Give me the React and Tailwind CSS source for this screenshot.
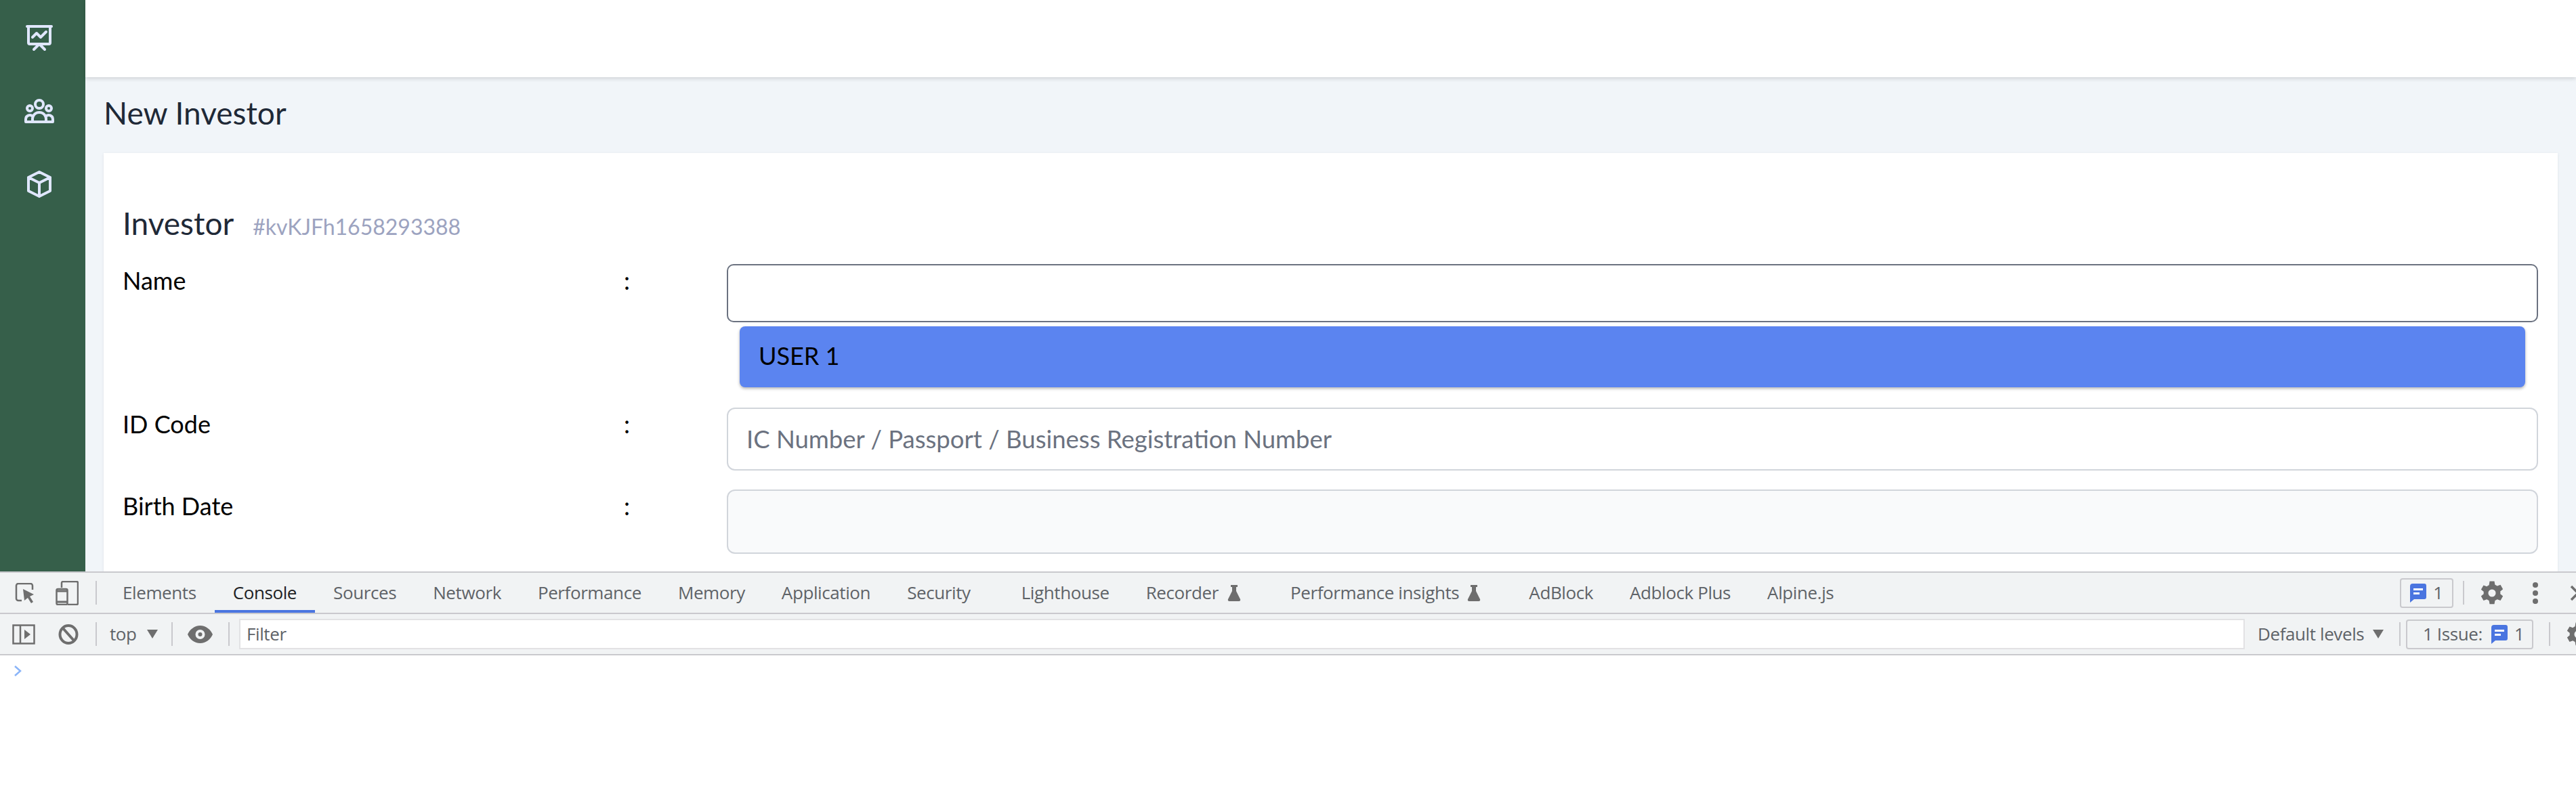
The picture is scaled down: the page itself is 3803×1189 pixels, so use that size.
import { HiOutlinePresentationChartLine, HiOutlineUserGroup, HiOutlineCube } from 'react-icons/hi';

const tabs = ['Elements', 'Console', 'Sources', 'Network', 'Performance', 'Memory', 'Application', 'Security'];

function Flask() {
  return (
    <svg className="w-[20px] h-[24px] shrink-0" viewBox="0 0 20 24" fill="#6e6e6e">
      <path d="M5 0h10v3h-2v6l6 12c.6 1.4 0 3-2 3H3c-2 0-2.600-1.600-2-3L7 9V3H5z" />
    </svg>
  );
}

function MessageIcon() {
  return (
    <svg className="w-[24px] h-[28px] shrink-0" viewBox="0 0 24 28">
      <path d="M4 0h17a3 3 0 013 3v17a3 3 0 01-3 3H6l-6 5V4a4 4 0 014-4z" fill="#4a75e0" />
      <path d="M5 7h14v3H5zM5 13h9v3H5z" fill="#fff" />
    </svg>
  );
}

function Gear({ className }) {
  return (
    <svg className={className} viewBox="0 0 24 24" fill="#6e6e6e">
      <path fillRule="evenodd" d="M14.200 0l.6 3.200c.7.3 1.400.7 2 1.200l3.100-1.100 2.300 4-2.500 2.100c.1.400.1.800.1 1.200s0 .8-.1 1.200l2.500 2.100-2.300 4-3.100-1.100c-.6.500-1.300.9-2 1.200l-.6 3.200H9.800l-.6-3.200c-.7-.3-1.400-.7-2-1.200l-3.100 1.100-2.300-4 2.500-2.100C4.200 11.800 4.200 11.400 4.200 11s0-.8.1-1.200L1.800 7.700l2.300-4 3.100 1.100c.6-.5 1.300-.9 2-1.200L9.800 0zM12 7.500a3.500 3.500 0 100 7 3.500 3.500 0 000-7z" transform="translate(0 1)" />
    </svg>
  );
}

function Sep({ className = '' }) {
  return <div className={`w-[2px] h-[35px] bg-[#c9c9cd] shrink-0 ${className}`} />;
}

function Triangle() {
  return (
    <svg className="w-[16px] h-[13px] shrink-0" viewBox="0 0 16 13" fill="#6e6e6e">
      <path d="M0 0h16L8 13z" />
    </svg>
  );
}

function Field({ label, children }) {
  return (
    <div className="flex text-[36px] leading-[48px] text-black">
      <div className="w-[740px] shrink-0">{label}</div>
      <div className="w-[152px] shrink-0">:</div>
      <div className="flex-1">{children}</div>
    </div>
  );
}

export default function App() {
  return (
    <div className="h-[1189px] w-[3803px] overflow-hidden flex flex-col bg-white font-['Lato',sans-serif]">
      <div className="h-[844px] flex overflow-hidden shrink-0">
        {/* sidebar */}
        <div className="w-[126px] shrink-0 bg-[#365f4a] flex flex-col items-start pl-[34px] gap-[60.5px] pt-[31px] text-[#e0e7ff]">
          <HiOutlinePresentationChartLine className="w-[48px] h-[48px] shrink-0" />
          <HiOutlineUserGroup className="w-[48px] h-[48px] shrink-0" />
          <HiOutlineCube className="w-[48px] h-[48px] shrink-0" />
        </div>

        <div className="flex-1 flex flex-col bg-[#f1f5f9] min-w-0">
          <div className="h-[114px] shrink-0 bg-white shadow-[0_2px_6px_rgba(0,0,0,0.15)]" />
          <div className="pl-[27px] pr-[27px]">
            <h1 className="text-[46px] leading-[56px] pt-[25px] text-[#1f2937]">New Investor</h1>
            <div className="mt-[31px] bg-white shadow-[0_1px_4px_rgba(0,0,0,0.08)] pl-[28px] pr-[29px] pt-[76px] h-[800px]">
              <div className="flex items-baseline gap-[28px] h-[56px]">
                <span className="text-[46px] leading-[56px] text-[#1f2937]">Investor</span>
                <span className="text-[32px] text-[#9ca3c0]">#kvKJFh1658293388</span>
              </div>
              <div className="mt-[32px]">
                <Field label="Name">
                  <div className="h-[86px] border-2 border-[#6b7280] rounded-[10px] bg-white" />
                  <div className="mt-[6px] mx-[19px] h-[90px] rounded-[8px] bg-[#5b84f0] pl-[28px] leading-[86px] shadow-[0_2px_4px_rgba(0,0,0,0.3)]">USER 1</div>
                </Field>
              </div>
              <div className="mt-[30px]">
                <Field label="ID Code">
                  <div className="h-[93px] border-2 border-[#d1d5db] rounded-[12px] bg-white pl-[27px] leading-[89px] text-[36.5px] text-[#6b7280]">IC Number / Passport / Business Registration Number</div>
                </Field>
              </div>
              <div className="mt-[28px]">
                <Field label="Birth Date">
                  <div className="h-[95px] border-2 border-[#d1d5db] rounded-[12px] bg-[#f9fafb]" />
                </Field>
              </div>
            </div>
          </div>
        </div>
      </div>

      {/* devtools */}
      <div className="flex-1 flex flex-col font-['Open_Sans',sans-serif] text-[#5f6368] text-[26px] tracking-[-0.4px] whitespace-nowrap">
        <div className="h-[63px] shrink-0 border-y-2 border-[#c9c9cd] bg-[#f1f3f4] flex items-center overflow-hidden">
          <svg className="w-[30px] h-[30px] ml-[22px] shrink-0" viewBox="0 0 30 30" fill="none" stroke="#6e6e6e" strokeWidth="2.500">
            <path d="M10 26H5a3 3 0 01-3-3V4a3 3 0 013-3h18a3 3 0 013 3v6" />
            <path d="M12 9l16 8-6 3 5 8-3 2-5-8-5 4z" fill="#6e6e6e" stroke="none" />
          </svg>
          <svg className="w-[34px] h-[36px] ml-[30px] shrink-0" viewBox="0 0 34 36" fill="none" stroke="#6e6e6e" strokeWidth="2.500">
            <path d="M9 10V3a2 2 0 012-2h20a2 2 0 012 2v30a2 2 0 01-2 2H18" />
            <rect x="1.500" y="12" width="16" height="23" rx="2" />
            <path d="M2 15h15M2 31h15" strokeWidth="3" />
          </svg>
          <Sep className="ml-[25px]" />
          <div className="flex items-center ml-[11px] shrink-0">
            {tabs.map((t) => (
              <div key={t} className={`relative h-[59px] px-[27px] leading-[59px] ${t === 'Console' ? 'text-[#202124]' : ''}`}>
                {t}
                {t === 'Console' && <div className="absolute left-0 right-0 bottom-0 h-[4px] bg-[#4a75e0]" />}
              </div>
            ))}
            <div className="ml-[21px] px-[27px] leading-[59px]">Lighthouse</div>
            <div className="flex items-center gap-[13px] px-[27px]">Recorder<Flask /></div>
            <div className="flex items-center gap-[12px] pl-[46px] pr-[27px]">Performance insights<Flask /></div>
            <div className="ml-[17px] px-[27px]">AdBlock</div>
            <div className="px-[27px]">Adblock Plus</div>
            <div className="px-[27px]">Alpine.js</div>
          </div>
          <div className="ml-auto flex items-center shrink-0">
            <div className="w-[79px] h-[44px] border-2 border-[#c9c9cd] rounded-[4px] flex items-center justify-center gap-[10px]"><MessageIcon />1</div>
            <Sep className="ml-[14px]" />
            <Gear className="w-[38px] h-[38px] ml-[22px] shrink-0" />
            <div className="ml-[41px] flex flex-col gap-[4px] shrink-0">
              <div className="w-[8px] h-[8px] rounded-full bg-[#6e6e6e]" />
              <div className="w-[8px] h-[8px] rounded-full bg-[#6e6e6e]" />
              <div className="w-[8px] h-[8px] rounded-full bg-[#6e6e6e]" />
            </div>
            <svg className="w-[24px] h-[24px] ml-[47px] mr-[-15px] shrink-0" viewBox="0 0 24 24" stroke="#6e6e6e" strokeWidth="3.500" fill="none">
              <path d="M2 2l20 20M22 2L2 22" />
            </svg>
          </div>
        </div>

        <div className="h-[61px] shrink-0 border-b-2 border-[#c9c9cd] bg-[#f1f3f4] flex items-center overflow-hidden">
          <svg className="w-[34px] h-[30px] ml-[18px] shrink-0" viewBox="0 0 34 30" fill="none" stroke="#6e6e6e" strokeWidth="2.500">
            <rect x="1.500" y="1.500" width="31" height="27" />
            <path d="M12 1v28" />
            <path d="M18 8l9 7-9 7z" fill="#6e6e6e" stroke="none" />
          </svg>
          <svg className="w-[30px] h-[30px] ml-[34px] shrink-0" viewBox="0 0 30 30" fill="none" stroke="#6e6e6e" strokeWidth="4">
            <ellipse cx="15" cy="15" rx="12.500" ry="13" />
            <path d="M7 6l16 18" />
          </svg>
          <Sep className="ml-[25px]" />
          <span className="ml-[19px] w-[42px] shrink-0">top</span>
          <div className="ml-[13px]"><Triangle /></div>
          <Sep className="ml-[20px]" />
          <svg className="w-[37px] h-[26px] ml-[22px] shrink-0" viewBox="0 0 37 26">
            <path fillRule="evenodd" d="M18.500 0C27 0 34 6 37 13c-3 7-10 13-18.500 13S3 20 0 13C3 6 10 0 18.500 0zm0 6a7 7 0 100 14 7 7 0 000-14z" fill="#6e6e6e" />
            <circle cx="18.500" cy="13" r="3" fill="#6e6e6e" />
          </svg>
          <Sep className="ml-[23px]" />
          <div className="ml-[14px] w-[2961px] shrink-0 h-[45px] border-2 border-[#e2e2e4] bg-white pl-[9px] leading-[41px]">Filter</div>
          <span className="ml-[19px] w-[158px] shrink-0">Default levels</span>
          <div className="ml-[12px]"><Triangle /></div>
          <Sep className="ml-[23px]" />
          <div className="ml-[8px] w-[188px] h-[44px] border-2 border-[#c9c9cd] rounded-[4px] flex items-center pl-[23px] shrink-0">
            <span className="w-[85px] shrink-0">1 Issue:</span>
            <div className="ml-[16px]"><MessageIcon /></div>
            <span className="ml-[10px]">1</span>
          </div>
          <Sep className="ml-[23px]" />
          <Gear className="w-[38px] h-[38px] ml-[22px] mr-[-26px] shrink-0" />
        </div>

        <div className="flex-1 bg-white pl-[20px] pt-[15px]">
          <svg className="w-[13px] h-[16px]" viewBox="0 0 13 16" fill="none" stroke="#8ab4f8" strokeWidth="2.500">
            <path d="M2 1l8 7-8 7" />
          </svg>
        </div>
      </div>
    </div>
  );
}
